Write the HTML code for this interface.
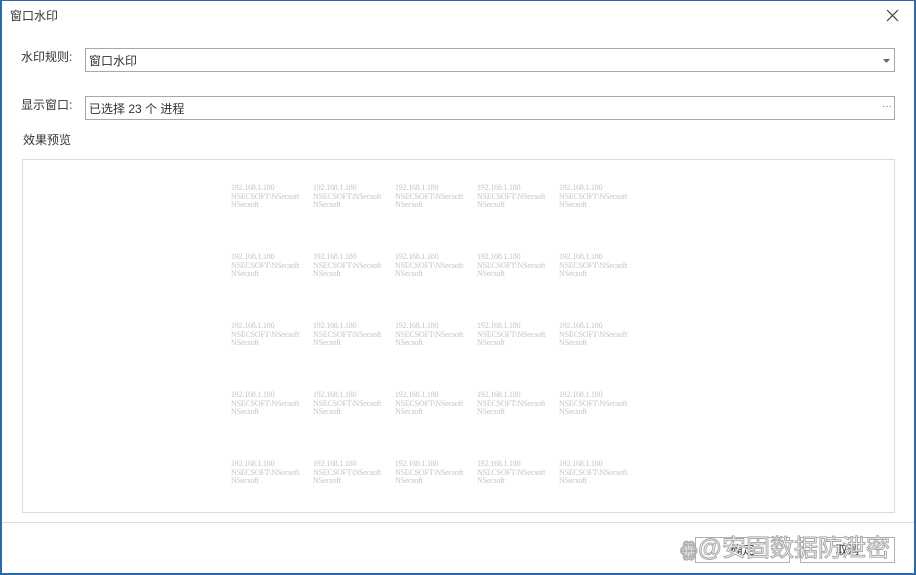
<!DOCTYPE html>
<html><head><meta charset="utf-8"><style>
*{margin:0;padding:0;box-sizing:border-box}
body{width:916px;height:575px;background:#fff;position:relative;overflow:hidden;font-family:"Liberation Sans","Noto Sans CJK SC",sans-serif;font-size:12px;color:#333}
.frame{position:absolute;inset:0;border:1px solid #2a6aa8;border-width:1px 2px 2px 2px;z-index:5}
.t{position:absolute}
.box{position:absolute;border:1px solid #a8a8a8;background:#fff}
.prev{position:absolute;left:22px;top:159px;width:873px;height:354px;border:1px solid #dcdcdc}
.wm{position:absolute;font-family:"Liberation Serif","Noto Serif CJK SC",serif;font-size:8px;line-height:8.5px;color:#c4c4c4;white-space:pre;letter-spacing:-0.2px}
.btn{position:absolute;top:537px;width:95px;height:26px;border:1px solid #b0b0b0;background:#fff;text-align:center;line-height:24px;font-size:12px}
</style></head><body>
<div class="frame"></div>
<div class="t" style="left:10px;top:7px;font-size:12px">窗口水印</div>
<svg class="t" style="left:886px;top:9px" width="13" height="13"><path d="M1 1L12 12M12 1L1 12" stroke="#444" stroke-width="1.2"/></svg>
<div class="t" style="left:21px;top:48px;font-size:12px">水印规则:</div>
<div class="box" style="left:85px;top:48px;width:810px;height:24px"><span class="t" style="left:3px;top:3px">窗口水印</span><svg class="t" style="left:797px;top:10px" width="7" height="4"><path d="M0 0H7L3.5 4Z" fill="#666"/></svg></div>
<div class="t" style="left:21px;top:96px;font-size:12px">显示窗口:</div>
<div class="box" style="left:85px;top:96px;width:810px;height:24px"><span class="t" style="left:3px;top:3px">已选择 23 个 进程</span><span class="t" style="left:796px;top:4px;font-size:10px;color:#666">···</span></div>
<div class="t" style="left:23px;top:131px;font-size:12px">效果预览</div>
<div class="prev"></div>
<div id="w"></div>
<div class="t" style="left:2px;top:522px;width:912px;height:1px;background:#dcdcdc"></div>
<div class="btn" style="left:695px">确定</div>
<div class="btn" style="left:800px">取消</div>
<div class="t" style="left:680px;top:528px;font-size:24px;color:#fff;-webkit-text-stroke:1px #aaa;white-space:nowrap">&#8203;<span style="font-size:20px">ꙮ</span>@安固数据防泄密</div>
<script>
var h='';var xs=[231,313,395,477,559],ys=[184,253,322,391,460];
ys.forEach(function(y){xs.forEach(function(x){h+='<div class="wm" style="left:'+x+'px;top:'+y+'px">192.168.1.180\nNSECSOFT\\NSecsoft\nNSecsoft</div>'})});
document.getElementById('w').innerHTML=h;
</script>
</body></html>
